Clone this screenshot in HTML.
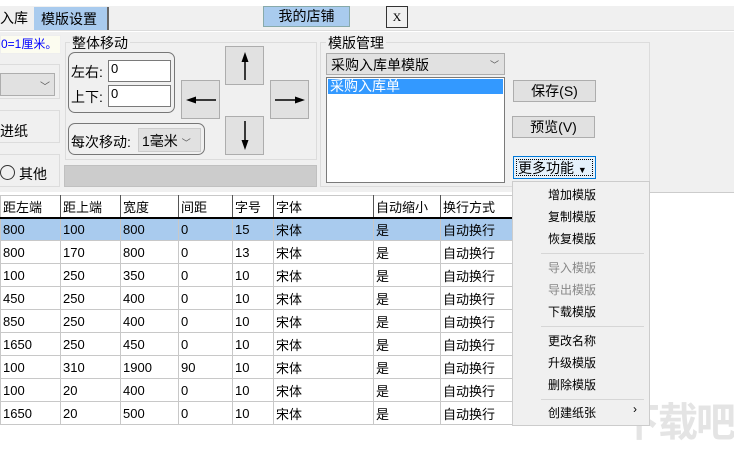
<!DOCTYPE html>
<html><head><meta charset="utf-8"><style>
*{margin:0;padding:0;box-sizing:border-box}
body{width:734px;height:449px;overflow:hidden;background:#fff;font-family:"Liberation Sans","Noto Sans CJK SC","WenQuanYi Zen Hei",sans-serif;font-size:13px;color:#000;position:relative}
.a{position:absolute}
.btn{position:absolute;background:#e1e1e1;border:1px solid #adadad;text-align:center}
.btn svg{position:absolute;left:0;top:0}
.grp{position:absolute;border:1px solid #dcdcdc}
.lbl{position:absolute;background:#f0f0f0;padding:0 2px;font-size:14px}
.in{position:absolute;background:#fff;border:1px solid #7a7a7a;font-size:13px;padding-left:2px}
table{border-collapse:collapse;position:absolute;left:0;top:195px;font-size:13px}
td{border:1px solid #c8c8c8;height:23px;padding-left:2px;white-space:nowrap}
tr.h td{border-bottom:2px solid #000;border-right:1px solid #555;height:22px}
tr.s td{background:#a9cbee}
.menu{position:absolute;left:512px;top:181px;width:138px;height:245px;background:#f0f0f0;border:1px solid #ccc;font-size:12px}
.mi{position:absolute;left:35px}
.sep{position:absolute;left:28px;width:103px;border-top:1px solid #d6d6d6}
</style></head><body>
<div class="a" style="left:0;top:6px;width:734px;height:25px;background:#f0f0f0;border-bottom:1px solid #dcdcdc"></div>
<div class="a" style="left:0;top:8px;font-size:14px">入库</div>
<div class="a" style="left:34px;top:7px;width:75px;height:23px;background:#a9cbee;border-right:2px solid #666;font-size:14px;padding:2px 0 0 7px">模版设置</div>
<div class="a" style="left:263px;top:6px;width:87px;height:21px;background:#a9cbee;border:1px solid #8aa;font-size:14px;text-align:center;line-height:19px">我的店铺</div>
<div class="a" style="left:386px;top:6px;width:22px;height:22px;border:1px solid #333;font-size:12px;text-align:center;line-height:20px;font-family:'Liberation Serif',serif">X</div>
<div class="a" style="left:0;top:32px;width:734px;height:160px;background:#f0f0f0"></div>
<div class="a" style="left:0;top:35px;width:61px;height:19px;background:#fcfcf0;border:1px solid #eee;color:#0000ff;font-size:12px;white-space:nowrap;overflow:hidden;line-height:17px">0=1厘米。</div>
<div class="grp" style="left:-2px;top:64px;width:62px;height:35px"></div>
<div class="a" style="left:0;top:73px;width:55px;height:23px;background:#e1e1e1;border:1px solid #adadad;font-size:10px;text-align:right;padding:4px 4px 0 0;color:#555">﹀</div>
<div class="grp" style="left:-2px;top:110px;width:62px;height:33px"></div>
<div class="a" style="left:0;top:121px;font-size:14px">进纸</div>
<div class="grp" style="left:-2px;top:154px;width:62px;height:33px"></div>
<div class="a" style="left:0;top:165px;width:15px;height:15px;border:1px solid #333;border-radius:50%"></div>
<div class="a" style="left:19px;top:164px;font-size:14px">其他</div>
<div class="grp" style="left:65px;top:42px;width:252px;height:118px"></div>
<div class="lbl" style="left:70px;top:33px">整体移动</div>
<div class="a" style="left:68px;top:52px;width:107px;height:61px;border:1px solid #777;border-radius:7px"></div>
<div class="a" style="left:71px;top:62px;font-size:14px">左右:</div>
<div class="in" style="left:108px;top:60px;width:63px;height:22px">0</div>
<div class="a" style="left:71px;top:87px;font-size:14px">上下:</div>
<div class="in" style="left:108px;top:85px;width:63px;height:22px">0</div>
<div class="a" style="left:68px;top:123px;width:137px;height:32px;border:1px solid #777;border-radius:7px"></div>
<div class="a" style="left:71px;top:132px;font-size:14px">每次移动:</div>
<div class="a" style="left:138px;top:128px;width:63px;height:24px;background:#e1e1e1;border:1px solid #ccc;padding:2px 0 0 3px;font-size:14px">1毫米 <span style="font-size:9px;color:#555">﹀</span></div>
<div class="btn" style="left:225px;top:46px;width:39px;height:39px"><svg width="37" height="37"><line x1="19" y1="11" x2="19" y2="33" stroke="#000" stroke-width="1.5"/><path d="M19 5 L15.5 15 L22.5 15 Z"/></svg></div>
<div class="btn" style="left:181px;top:80px;width:39px;height:39px"><svg width="37" height="37"><line x1="10" y1="19" x2="34" y2="19" stroke="#000" stroke-width="1.5"/><path d="M4 19 L14 15.5 L14 22.5 Z"/></svg></div>
<div class="btn" style="left:270px;top:80px;width:39px;height:39px"><svg width="37" height="37"><line x1="4" y1="19" x2="28" y2="19" stroke="#000" stroke-width="1.5"/><path d="M34 19 L24 15.5 L24 22.5 Z"/></svg></div>
<div class="btn" style="left:225px;top:116px;width:39px;height:39px"><svg width="37" height="37"><line x1="19" y1="4" x2="19" y2="26" stroke="#000" stroke-width="1.5"/><path d="M19 33 L15.5 23 L22.5 23 Z"/></svg></div>
<div class="a" style="left:64px;top:165px;width:253px;height:22px;background:#ccc;border:1px solid #c0c0c0"></div>
<div class="grp" style="left:320px;top:42px;width:330px;height:145px"></div>
<div class="lbl" style="left:326px;top:33px">模版管理</div>
<div class="a" style="left:326px;top:53px;width:179px;height:22px;background:#e1e1e1;border:1px solid #adadad;font-size:14px;padding:1px 0 0 4px">采购入库单模版<span style="position:absolute;right:5px;top:4px;font-size:9px;color:#555">﹀</span></div>
<div class="a" style="left:326px;top:77px;width:179px;height:106px;background:#fff;border:1px solid #7a7a7a"></div>
<div class="a" style="left:328px;top:79px;width:175px;height:15px;background:#3399ff;color:#fff;font-size:14px;line-height:14px;padding-left:2px">采购入库单</div>
<div class="btn" style="left:513px;top:80px;width:83px;height:22px;font-size:14px;line-height:20px">保存(S)</div>
<div class="btn" style="left:512px;top:116px;width:83px;height:22px;font-size:14px;line-height:20px">预览(V)</div>
<div class="a" style="left:513px;top:156px;width:83px;height:23px;background:#e5f1fb;border:1px solid #0078d7;font-size:14px;padding:1px 0 0 4px"><span style="position:absolute;inset:2px;border:1px dotted #000"></span>更多功能 <span style="font-size:9px">▼</span></div>
<table>
<tr class="h"><td style="width:60px">距左端</td><td style="width:60px">距上端</td><td style="width:58px">宽度</td><td style="width:54px">间距</td><td style="width:41px">字号</td><td style="width:100px">字体</td><td style="width:67px">自动缩小</td><td style="width:72px">换行方式</td></tr>
<tr class="s"><td>800</td><td>100</td><td>800</td><td>0</td><td>15</td><td>宋体</td><td>是</td><td>自动换行</td></tr>
<tr><td>800</td><td>170</td><td>800</td><td>0</td><td>13</td><td>宋体</td><td>是</td><td>自动换行</td></tr>
<tr><td>100</td><td>250</td><td>350</td><td>0</td><td>10</td><td>宋体</td><td>是</td><td>自动换行</td></tr>
<tr><td>450</td><td>250</td><td>400</td><td>0</td><td>10</td><td>宋体</td><td>是</td><td>自动换行</td></tr>
<tr><td>850</td><td>250</td><td>400</td><td>0</td><td>10</td><td>宋体</td><td>是</td><td>自动换行</td></tr>
<tr><td>1650</td><td>250</td><td>450</td><td>0</td><td>10</td><td>宋体</td><td>是</td><td>自动换行</td></tr>
<tr><td>100</td><td>310</td><td>1900</td><td>90</td><td>10</td><td>宋体</td><td>是</td><td>自动换行</td></tr>
<tr><td>100</td><td>20</td><td>400</td><td>0</td><td>10</td><td>宋体</td><td>是</td><td>自动换行</td></tr>
<tr><td>1650</td><td>20</td><td>500</td><td>0</td><td>10</td><td>宋体</td><td>是</td><td>自动换行</td></tr>
</table>
<div class="a" style="left:512px;top:192px;width:222px;border-top:1px solid #ccc"></div>
<div class="a" style="left:620px;top:390px;font-size:40px;color:#e4e4e4;font-weight:bold;letter-spacing:-2px">下载吧</div>
<div class="menu">
<div class="mi" style="top:4px">增加模版</div>
<div class="mi" style="top:26px">复制模版</div>
<div class="mi" style="top:48px">恢复模版</div>
<div class="sep" style="top:71px"></div>
<div class="mi" style="top:77px;color:#888">导入模版</div>
<div class="mi" style="top:99px;color:#888">导出模版</div>
<div class="mi" style="top:121px">下载模版</div>
<div class="sep" style="top:144px"></div>
<div class="mi" style="top:150px">更改名称</div>
<div class="mi" style="top:172px">升级模版</div>
<div class="mi" style="top:194px">删除模版</div>
<div class="sep" style="top:217px"></div>
<div class="mi" style="top:222px">创建纸张</div>
<div class="a" style="left:120px;top:220px;font-size:12px">›</div>
</div>
</body></html>
